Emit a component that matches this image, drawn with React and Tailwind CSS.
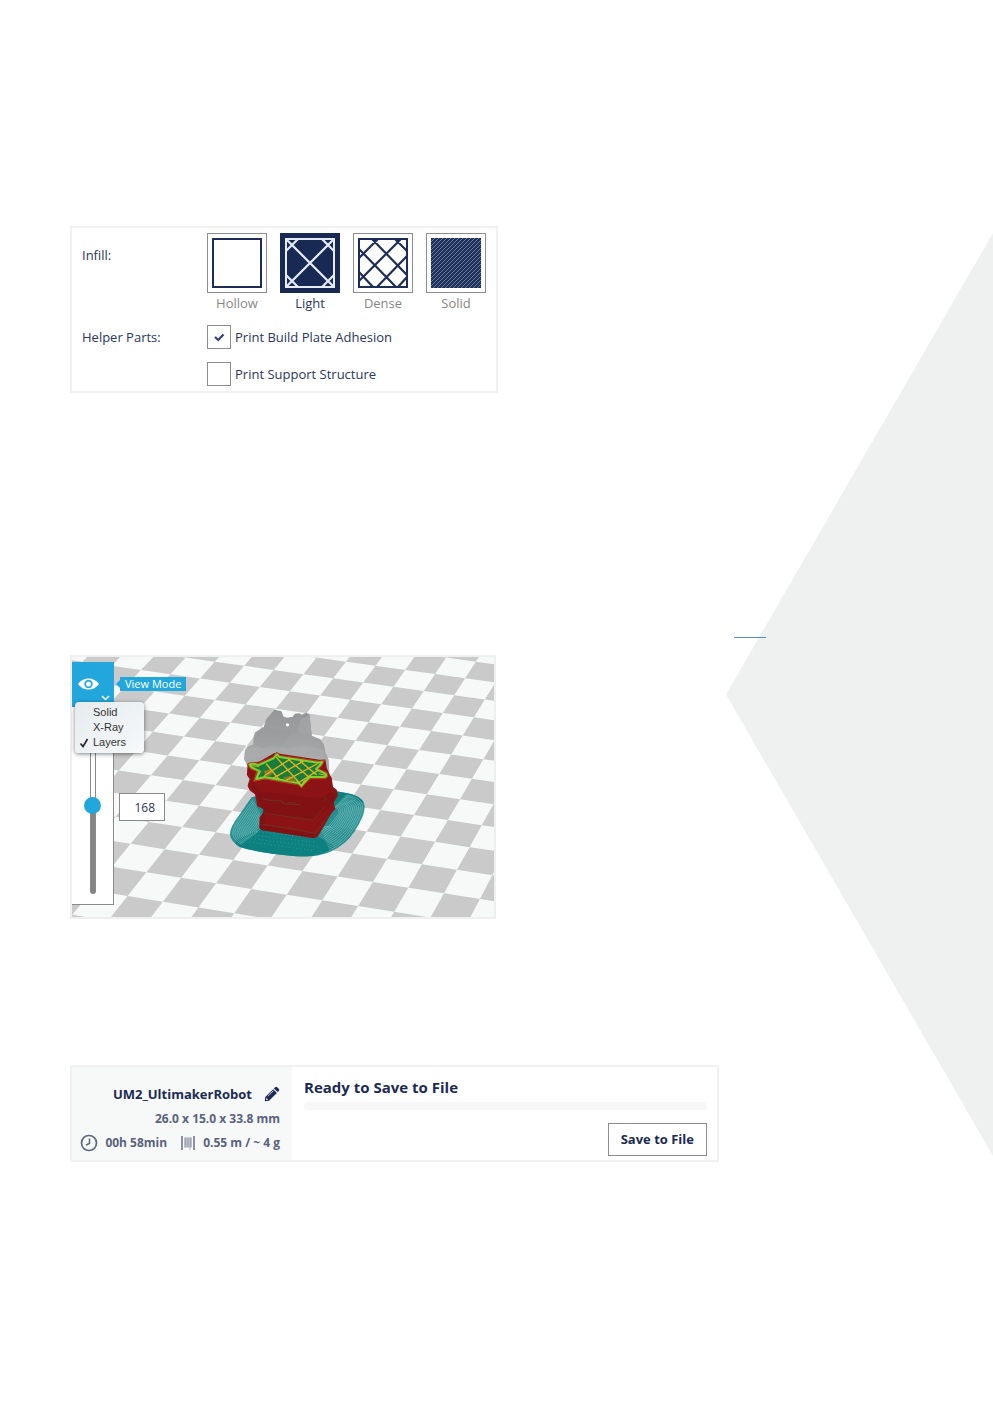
import React, { useState } from "react";

/* Build plate floor: plane-to-view projection coefficients */
const H = [32.642, -18.839, 309.17, 4.6216, 18.499, 153.32, -0.00293, -0.017];

function project(i, j) {
  const w = H[6] * i + H[7] * j + 1;
  const x = (H[0] * i + H[1] * j + H[2]) / w;
  const y = (H[3] * i + H[4] * j + H[5]) / w;
  return `${x.toFixed(1)} ${y.toFixed(1)}`;
}

function floorPath() {
  const cells = [];
  for (let i = -16; i < 8; i++) {
    for (let j = -12; j < 9; j++) {
      if ((i + j) % 2 === 0) {
        cells.push(`M${project(i, j)}L${project(i + 1, j)}L${project(i + 1, j + 1)}L${project(i, j + 1)}Z`);
      }
    }
  }
  return cells.join("");
}

const FLOOR = floorPath();
const BRIM_RINGS = [0, 1, 2, 3, 4, 5, 6, 7, 8, 9, 10, 11, 12];

function HollowIcon() {
  return (
    <svg viewBox="0 0 50 50" className="size-[50px]" aria-hidden="true">
      <rect x="1" y="1" width="48" height="48" fill="#fff" stroke="#1d2d59" strokeWidth="2" />
    </svg>
  );
}

function LightIcon() {
  return (
    <svg viewBox="0 0 50 50" className="size-[50px]" aria-hidden="true">
      <rect width="50" height="50" fill="#182a54" />
      <path d="M1 1L49 49M49 1L1 49M13 1L1 13M37 1L49 13M1 37L13 49M49 37L37 49" stroke="#e6ebf3" strokeWidth="2.2" fill="none" />
      <rect x="1" y="1" width="48" height="48" fill="none" stroke="#e6ebf3" strokeWidth="2" />
    </svg>
  );
}

function DenseIcon() {
  return (
    <svg viewBox="0 0 50 50" className="size-[50px]" aria-hidden="true">
      <rect width="50" height="50" fill="#fff" />
      <path
        d="M14 1L49 37M37 1L49 13M1 11L38 49M1 34L15 49M20 1L1 20M43 1L1 43M49 18L19 49M49 39L40 49"
        stroke="#1d2d59"
        strokeWidth="2.2"
        fill="none"
      />
      <rect x="1" y="1" width="48" height="48" fill="none" stroke="#1d2d59" strokeWidth="2" />
    </svg>
  );
}

function SolidIcon() {
  const lines = [];
  for (let k = 4; k < 98; k += 4) lines.push(`M${k} 0L0 ${k}`);
  return (
    <svg viewBox="0 0 50 50" className="size-[50px]" aria-hidden="true">
      <rect width="50" height="50" fill="#20325c" />
      <path d={lines.join("")} stroke="#7484a4" strokeWidth="0.9" fill="none" />
    </svg>
  );
}

const infills = [
  { name: "Hollow", Icon: HollowIcon },
  { name: "Light", Icon: LightIcon },
  { name: "Dense", Icon: DenseIcon },
  { name: "Solid", Icon: SolidIcon },
];

function InfillOption({ name, Icon, selected, onSelect }) {
  return (
    <label className="flex cursor-pointer flex-col items-center">
      <input type="radio" name="infill" className="sr-only" checked={selected} onChange={onSelect} />
      <span
        className={
          selected
            ? "flex size-[60px] items-center justify-center border border-[#182a54] bg-[#182a54]"
            : "flex size-[60px] items-center justify-center border border-[#8d8d8d] bg-white"
        }
      >
        <Icon />
      </span>
      <span className={selected ? "text-[#2a3560]" : "text-[#868686]"}>{name}</span>
    </label>
  );
}

function HelperOption({ label, defaultChecked }) {
  return (
    <label className="flex w-fit items-center gap-1">
      <span className="grid">
        <input
          type="checkbox"
          defaultChecked={defaultChecked}
          className="peer col-start-1 row-start-1 size-6 appearance-none border border-[#8d8d8d] bg-white"
        />
        <svg
          viewBox="0 0 24 24"
          className="pointer-events-none invisible col-start-1 row-start-1 size-6 peer-checked:visible"
          aria-hidden="true"
        >
          <path d="M8 12L11.2 15L16.5 9.5" fill="none" stroke="#36437a" strokeWidth="2.3" />
        </svg>
      </span>
      {label}
    </label>
  );
}

function InfillPanel() {
  const [infill, setInfill] = useState("Light");
  return (
    <section className="grid w-full max-w-[428px] grid-cols-[125px_1fr] gap-y-3 border-2 border-[#f1f1f1] bg-white pt-[5px] pb-[5px] pl-[10px] text-[13px] leading-5 text-[#2a3560]">
      <span className="pt-3">Infill:</span>
      <div className="flex gap-[13px]">
        {infills.map(({ name, Icon }) => (
          <InfillOption key={name} name={name} Icon={Icon} selected={infill === name} onSelect={() => setInfill(name)} />
        ))}
      </div>
      <span className="pt-[2px]">Helper Parts:</span>
      <div className="flex flex-col gap-[13px]">
        <HelperOption label="Print Build Plate Adhesion" defaultChecked />
        <HelperOption label="Print Support Structure" />
      </div>
    </section>
  );
}

function Scene() {
  return (
    <svg viewBox="0 0 423 261" preserveAspectRatio="xMidYMid slice" className="block w-full bg-[#f7f9f8]" aria-hidden="true">
      <defs>
        <linearGradient id="ghost" x1="0" y1="0" x2="0" y2="1">
          <stop offset="0" stopColor="#8f9091" />
          <stop offset="1" stopColor="#a9aaab" />
        </linearGradient>
      </defs>
      <path d={FLOOR} fill="#cacaca" />
      <g transform="translate(148 43) scale(0.33333)">
        {/* brim */}
        <path
          d="M96 293L60 345Q30 385 31 404Q34 428 60 440Q110 460 230 470Q290 474 330 458Q380 436 406 395Q438 346 436 318Q428 288 380 280L350 275L200 270Z"
          fill="#0f8585"
          fillOpacity="0.88"
        />
        <path
          d="M60 442Q34 428 60 418L120 388L295 410L345 440Q310 474 230 470Q110 460 60 442Z"
          fill="#0c8180"
        />
        <path d="M350 275L380 280Q425 288 434 310L400 300L345 318Z" fill="#0c8180" />
        <g fill="none" stroke="#c6e4e2" strokeWidth="1.1">
          {BRIM_RINGS.map((k) => (
            <path key={k} d={`M${101 + k * 2.4} ${300 + k * 5}L${64 + k * 5} ${350 + k * 3}Q${36 + k * 6} ${388 + k * 1} ${40 + k * 6} ${406 - k}Q${44 + k * 5} ${424 - k * 2} ${66 + k * 4} ${434 - k * 3}`} />
          ))}
          {BRIM_RINGS.map((k) => (
            <path key={k} d={`M${380 - k * 3} ${286 + k * 3}Q${424 - k * 5} ${292 + k * 3} ${430 - k * 6} ${318 + k * 2}Q${430 - k * 7} ${346 + k} ${400 - k * 6} ${392 - k}Q${374 - k * 6} ${432 - k * 4} ${330 - k * 2} ${452 - k * 5}`} />
          ))}
        </g>
        <g fill="none" stroke="#7cc4c0" strokeWidth="1.6" strokeDasharray="2 9">
          <path d="M95 406L290 428" />
          <path d="M85 416L300 442" />
          <path d="M90 427L280 453" />
          <path d="M120 397L280 414" />
        </g>
        {/* unprinted upper part */}
        <path
          fillRule="evenodd"
          d="M165 30L186 34L192 50L203 54L220 51L226 42L240 40L246 45L260 39L270 44L277 108L303 118L314 135L318 158L328 180L330 225L100 225L82 195L73 178L76 152L84 140L101 134L102 112L106 98L132 82L140 58ZM204 70A5 5 0 1 0 204 80A5 5 0 1 0 204 70Z"
          fill="url(#ghost)"
          fillOpacity="0.94"
        />
        <path d="M102 136L128 145L160 138L200 146L250 138L312 150L320 185L170 160L76 180L76 155Z" fill="#b4b5b6" fillOpacity="0.3" />
        <path d="M270 44L277 108L252 106L232 90L245 60Z" fill="#a2a3a4" />
        {/* printed shell */}
        <path
          d="M84 192L120 185L165 160L300 180L318 180L322 205L330 222L337 235L341 262L352 270L356 288L343 308L348 328L337 340L296 410L285 416L125 391L119 384L120 352L131 340L131 328L113 320L106 284L90 272L84 258L90 238L82 226Z"
          fill="#8c1315"
        />
        <path d="M84 205L105 225L95 262L110 285L131 330L120 385L126 391L285 416L290 402L135 378L135 344L280 360L345 308L345 275L300 296L115 275Z" fill="#7a1114" fillOpacity="0.55" />
        <g fill="none" stroke="#5d4420" strokeWidth="2" strokeLinejoin="round">
          <path d="M128 297L150 302L188 304L190 312L244 315M206 309L228 309" />
          <path d="M134 340L170 346L280 362L300 340L318 320" />
          <path d="M128 374L240 392L286 402L330 348" />
          <path d="M314 290L320 300L310 306" />
        </g>
        {/* current layer */}
        <path
          d="M84 193Q96 184 116 191L160 172L172 157L181 167L300 184L316 180L308 198L296 207L322 218Q332 232 318 237L274 237L258 251L246 266L238 256L136 238L102 245L112 214L92 207Z"
          fill="#45892e"
          stroke="#d22a1e"
          strokeWidth="3"
          strokeLinejoin="round"
        />
        <path
          d="M90 195Q98 189 118 196L162 176L172 164L180 172L296 189L308 187L302 196L290 208L318 222Q324 230 314 232L270 232L246 258L238 250L136 232L110 238L120 214L96 203Z"
          fill="#187c3c"
          stroke="#7fd12c"
          strokeWidth="6"
          strokeLinejoin="round"
        />
        <path d="M132 214L152 208L160 222L142 232ZM190 234L212 228L232 246L204 244Z" fill="#8a7a2a" />
        <g fill="none" stroke="#e6b41c" strokeWidth="4">
          <path d="M170 172L240 250M206 178L268 232M242 184L292 226M140 192L178 238" />
          <path d="M134 228L212 178M160 236L252 184M200 242L294 192M236 250L296 212" />
          <path d="M94 198L118 200M112 232L124 214M298 222L318 227M246 258L256 240" strokeWidth="3" />
        </g>
      </g>
    </svg>
  );
}

function ViewPanel() {
  const [layer, setLayer] = useState(168);
  return (
    <section className="relative w-full max-w-[426px] border-2 border-[#efefef] font-['Open_Sans',sans-serif]">
      <Scene />
      <div className="absolute top-[5px] bottom-[12px] left-0 flex w-[42px] flex-col border-r border-b border-[#8a8a8a] bg-white">
        <button type="button" aria-label="View Mode" className="grid h-[45px] w-[42px] shrink-0 bg-[#22a7dd]">
          <svg viewBox="0 0 42 45" className="size-full" aria-hidden="true">
            <path
              fillRule="evenodd"
              d="M6 22Q10 16.500 16.500 16.500Q23 16.500 27 22Q23 27.500 16.500 27.500Q10 27.500 6 22ZM16.500 17.800A4.200 4.200 0 1 0 16.500 26.200A4.200 4.200 0 1 0 16.500 17.800Z"
              fill="#fff"
            />
            <ellipse cx="16.500" cy="22" rx="2.400" ry="2.600" fill="#fff" />
            <path d="M30 34L33.500 37.500L37 34" fill="none" stroke="#fff" strokeWidth="1.500" />
          </svg>
        </button>
        <div className="mt-8 mb-[10px] flex min-h-0 grow justify-center">
          <input
            type="range"
            aria-label="Layer"
            min="0"
            max="290"
            value={layer}
            onChange={(e) => setLayer(Number(e.target.value))}
            style={{
              "--fill": `${(layer / 290) * 100}%`,
            }}
            className="h-full w-[18px] appearance-none bg-transparent [direction:rtl] [writing-mode:vertical-lr] [&::-webkit-slider-runnable-track]:w-[6px] [&::-webkit-slider-runnable-track]:rounded-full [&::-webkit-slider-runnable-track]:border-r [&::-webkit-slider-runnable-track]:border-l [&::-webkit-slider-runnable-track]:border-[#8a8a8a] [&::-webkit-slider-runnable-track]:bg-[linear-gradient(to_top,#858585_var(--fill),#ffffff_var(--fill))] [&::-webkit-slider-thumb]:-ml-[7px] [&::-webkit-slider-thumb]:size-[17px] [&::-webkit-slider-thumb]:appearance-none [&::-webkit-slider-thumb]:rounded-full [&::-webkit-slider-thumb]:bg-[#22a7dd]"
          />
        </div>
      </div>
      <div className="absolute top-[20px] left-[44px] flex items-center" role="tooltip">
        <svg viewBox="0 0 4 8" className="h-2 w-1" aria-hidden="true">
          <path d="M4 0V8L0 4Z" fill="#22a7dd" />
        </svg>
        <span className="bg-[#22a7dd] px-[5px] text-[11px] leading-[14px] font-medium text-white">View Mode</span>
      </div>
      <ul
        role="menu"
        className="absolute top-[45px] left-[3px] w-[69px] rounded-[4px] bg-linear-to-br from-[#e4ebef] to-[#f7f9fa] py-[3px] font-['Liberation_Sans',sans-serif] text-[11px] leading-[15px] text-[#333] shadow-[0_1px_4px_rgba(0,0,0,0.5)]"
      >
        {["Solid", "X-Ray", "Layers"].map((mode) => (
          <li key={mode} role="menuitemradio" aria-checked={mode === "Layers"} className="flex items-center">
            <span className="flex w-[18px] justify-center">
              {mode === "Layers" && (
                <svg viewBox="0 0 10 10" className="size-[10px]" aria-hidden="true">
                  <path d="M1.500 5.500L4 8.500L8.500 1" fill="none" stroke="#222" strokeWidth="1.600" />
                </svg>
              )}
            </span>
            {mode}
          </li>
        ))}
      </ul>
      <input
        aria-label="Layer number"
        value={layer}
        onChange={(e) => setLayer(Number(e.target.value) || 0)}
        className="absolute top-[136px] left-[47px] h-7 w-[46px] border border-[#8a8a8a] bg-white pr-[9px] text-right text-[12px] text-[#2a3560]"
      />
    </section>
  );
}

function ClockIcon() {
  return (
    <svg viewBox="0 0 18 18" className="size-[18px]" aria-hidden="true">
      <circle cx="9" cy="9" r="7.500" fill="none" stroke="#5d6781" strokeWidth="1.700" />
      <path d="M9.500 4.500V9.500L6 11" fill="none" stroke="#5d6781" strokeWidth="1.500" />
    </svg>
  );
}

function SpoolIcon() {
  return (
    <svg viewBox="0 0 16 16" className="size-4" aria-hidden="true">
      <path d="M1 1H3V15H1ZM13 1H15V15H13Z" fill="#8a90a2" />
      <path d="M4 2.500H12V12.500H10.500V15H9.500V12.500H4Z" fill="#b9bdc8" />
      <path d="M5.500 2.500V12.500M8 2.500V12.500M10.500 2.500V12.500" stroke="#9a9fb0" strokeWidth="0.800" />
    </svg>
  );
}

function PencilIcon() {
  return (
    <svg viewBox="0 0 16 16" className="size-4" aria-hidden="true">
      <path d="M11.200 1.200Q12.200 0.200 13.200 1.200L14.900 2.900Q15.800 3.900 14.900 4.800L13.600 6.100L9.900 2.500Z" fill="#1b2a55" />
      <path fillRule="evenodd" d="M9.200 3.200L12.900 6.900L5 14.700L0.800 15.300L1.300 11.100ZM2.300 11.900L2 14.100L4.200 13.800ZM4 10.600L9.600 5L9.200 4.600L3.600 10.200Z" fill="#1b2a55" />
    </svg>
  );
}

function JobPanel() {
  return (
    <section className="flex w-full max-w-[649px] border-2 border-[#f1f1f1] bg-white font-bold">
      <div className="flex w-[220px] shrink-0 flex-col items-end bg-[#f7f9f9] pt-[17px] pr-[12px] pb-[5px] text-[12px] text-[#59627f]">
        <div className="flex h-5 items-center gap-3 text-[13px] text-[#1b2a55]">
          UM2_UltimakerRobot
          <button type="button" aria-label="Rename job">
            <PencilIcon />
          </button>
        </div>
        <div className="mt-[3px] leading-6">26.0 x 15.0 x 33.8 mm</div>
        <div className="flex items-center leading-6">
          <ClockIcon />
          <span className="ml-[7px]">00h 58min</span>
          <span className="mr-[7px] ml-[13px]">
            <SpoolIcon />
          </span>
          0.55 m / ~ 4 g
        </div>
      </div>
      <div className="flex min-w-0 grow flex-col pt-[10px] pr-[10px] pb-1 pl-[12px] text-[#1b2a55]">
        <h2 className="text-[15px] leading-5">Ready to Save to File</h2>
        <div role="progressbar" aria-label="Saving" aria-valuenow={0} className="mt-[5px] h-2 rounded-full bg-[#f7f7f7]" />
        <button type="button" className="mt-[13px] h-[33px] self-end border border-[#8d8d8d] bg-white px-[12px] text-[13px]">
          Save to File
        </button>
      </div>
    </section>
  );
}

export default function App() {
  return (
    <div className="relative min-h-screen overflow-hidden bg-white font-['Open_Sans',sans-serif]">
      <div className="absolute top-[233px] right-0 h-[923px] w-[267px] bg-[#eff1f1] [clip-path:polygon(100%_0,100%_100%,0_50%)]" />
      <main className="relative flex min-h-screen flex-col px-[70px] pt-[226px]">
        <InfillPanel />
        <div className="mt-[244px] mr-[157px] h-px w-8 self-end bg-[#4f8fd0]" />
        <div className="mt-[17px]">
          <ViewPanel />
        </div>
        <div className="mt-[146px]">
          <JobPanel />
        </div>
      </main>
    </div>
  );
}
